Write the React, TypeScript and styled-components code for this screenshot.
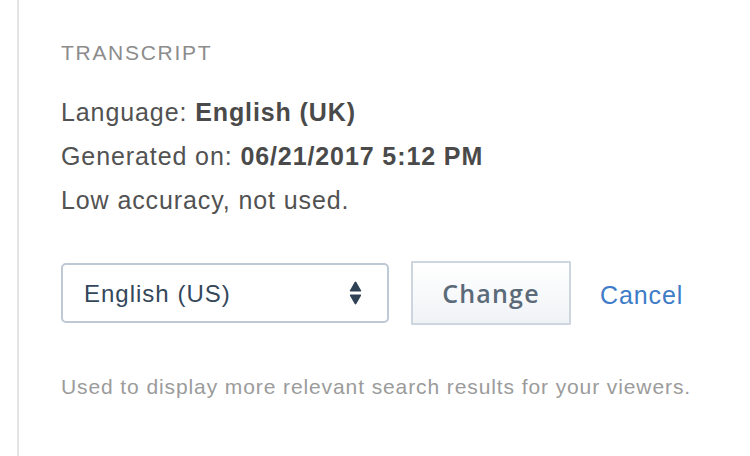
import React from 'react';
import styled, { createGlobalStyle } from 'styled-components';

const GlobalStyle = createGlobalStyle`
	html,
	body {
		margin: 0;
		padding: 0;
		background: #ffffff;
	}
	body {
		font-family: 'Liberation Sans', Arial, sans-serif;
	}
`;

const details = [
	{ label: 'Language:', value: 'English (UK)' },
	{ label: 'Generated on:', value: '06/21/2017 5:12 PM' },
	{ label: 'Low accuracy, not used.', value: '' },
];

const SortIcon: React.FC = () => (
	<svg width='13' height='24' viewBox='0 0 13 24' aria-hidden='true'>
		<path
			d='M1 9.2 L5.6 1.2 Q6.5 0 7.4 1.2 L12 9.2 Q12.6 10.4 11.2 10.4 H1.8 Q0.4 10.4 1 9.2 Z'
			fill='#2f4154'
		/>
		<path
			d='M1 14.8 L5.6 22.8 Q6.5 24 7.4 22.8 L12 14.8 Q12.6 13.6 11.2 13.6 H1.8 Q0.4 13.6 1 14.8 Z'
			fill='#2f4154'
		/>
	</svg>
);

export default function App() {
	return (
		<>
			<GlobalStyle />
			<Panel>
				<Section>
					<Title>TRANSCRIPT</Title>
					<Details>
						{details.map((row, i) => (
							<Line key={i}>
								{row.label}
								{row.value && <strong> {row.value}</strong>}
							</Line>
						))}
					</Details>
					<Controls>
						<SelectWrap>
							<Select defaultValue='en-US'>
								<option value='en-US'>English (US)</option>
								<option value='en-GB'>English (UK)</option>
							</Select>
							<IconSpot>
								<SortIcon />
							</IconSpot>
						</SelectWrap>
						<ChangeButton type='button'>Change</ChangeButton>
						<LinkButton type='button'>Cancel</LinkButton>
					</Controls>
					<Hint>Used to display more relevant search results for your viewers.</Hint>
				</Section>
			</Panel>
		</>
	);
}

const Panel = styled.main`
	margin-left: 17px;
	min-height: 100vh;
	border-left: 2px solid #e4e4e4;
	box-sizing: border-box;
`;

const Section = styled.section`
	display: flex;
	flex-direction: column;
	align-items: flex-start;
	padding: 40px 0 0 42px;
`;

const Title = styled.h2`
	margin: 0;
	font-size: 21px;
	line-height: 26px;
	font-weight: 400;
	letter-spacing: 1.7px;
	color: #8c8c8c;
`;

const Details = styled.div`
	display: flex;
	flex-direction: column;
	margin-top: 24px;
`;

const Line = styled.p`
	margin: 0;
	font-size: 25px;
	line-height: 44px;
	letter-spacing: 0.9px;
	color: #525252;

	strong {
		font-weight: 700;
		color: #4a4a4a;
	}
`;

const Controls = styled.div`
	display: flex;
	align-items: center;
	margin-top: 39px;
`;

const SelectWrap = styled.div`
	position: relative;
	width: 328px;
	height: 60px;
`;

const Select = styled.select`
	appearance: none;
	-webkit-appearance: none;
	width: 100%;
	height: 100%;
	box-sizing: border-box;
	padding: 0 50px 0 21px;
	border: 2px solid #bdc9d5;
	border-radius: 5px;
	background: #ffffff;
	font-family: 'Liberation Sans', Arial, sans-serif;
	font-size: 24px;
	letter-spacing: 1px;
	color: #34475a;
	outline: none;
`;

const IconSpot = styled.span`
	position: absolute;
	top: 50%;
	right: 27px;
	transform: translateY(-50%);
	display: flex;
	pointer-events: none;
`;

const ChangeButton = styled.button`
	margin-left: 22px;
	width: 160px;
	height: 64px;
	box-sizing: border-box;
	border: 2px solid #cdd6df;
	border-radius: 1px;
	background: linear-gradient(#ffffff, #f0f3f6);
	font-family: 'Open Sans', sans-serif;
	font-weight: 600;
	font-size: 25px;
	letter-spacing: 1.2px;
	color: #5b6a79;
	cursor: pointer;
`;

const LinkButton = styled.button`
	margin-left: 29px;
	padding: 4px 0 0;
	border: none;
	background: none;
	font-family: 'Liberation Sans', Arial, sans-serif;
	font-size: 25px;
	letter-spacing: 0.9px;
	color: #3e7cc8;
	cursor: pointer;
`;

const Hint = styled.p`
	margin: 49px 0 0;
	font-size: 21px;
	line-height: 25px;
	letter-spacing: 0.9px;
	color: #9b9b9b;
`;
